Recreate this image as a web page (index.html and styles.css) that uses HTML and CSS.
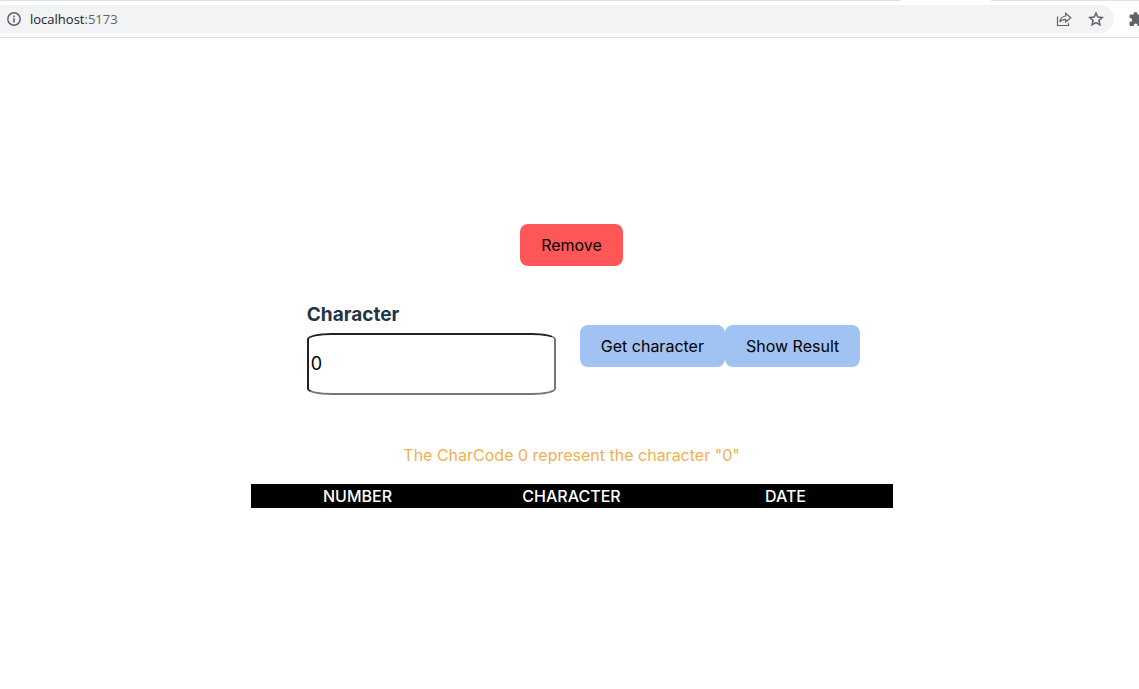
FILE: index.html
```html
<!DOCTYPE html>
<html lang="en">
<head>
<meta charset="utf-8">
<meta name="viewport" content="width=device-width, initial-scale=1">
<title>Character</title>
<link rel="stylesheet" href="styles.css">
</head>
<body>
<header class="toolbar">
  <div class="tab-edge"><span class="edge-left"></span><span class="edge-right"></span></div>
  <div class="toolbar-row">
    <div class="address">
      <svg class="icon" viewBox="0 0 16 16" aria-hidden="true"><circle cx="8" cy="8" r="6.2" fill="none" stroke="#5f6368" stroke-width="1.5"/><path d="M7.2 4.6h1.6v1.6H7.2zM7.2 7.2h1.6v4.2H7.2z" fill="#5f6368"/></svg>
      <span class="url">localhost<span class="port">:5173</span></span>
      <button class="tool" aria-label="Share"><svg class="icon" viewBox="0 0 16 16"><path d="M1.5 5.5v9h11v-2.2M9.7 5V2.3L14.8 6.7 9.7 11V8.4C7 8.4 5.2 9.2 3.8 11 4.3 8 6 5.4 9.7 5z" fill="none" stroke="#5f6368" stroke-width="1.2" stroke-linejoin="miter"/></svg></button>
      <button class="tool" aria-label="Bookmark"><svg class="icon" viewBox="0 0 16 16"><path d="M8 2l1.8 4.1 4.4.4-3.3 3 1 4.3L8 11.5l-3.9 2.3 1-4.3-3.3-3 4.4-.4z" fill="none" stroke="#5f6368" stroke-width="1.5"/></svg></button>
    </div>
    <button class="extensions" aria-label="Extensions"><svg class="icon" viewBox="0 0 16 16"><path d="M1.5 4.5a1 1 0 0 1 1-1h3V3a2 2 0 0 1 4 0v.5h3a1 1 0 0 1 1 1v3h.3a2 2 0 0 1 0 4h-.3V14a1 1 0 0 1-1 1H9.6v-.7a1.9 1.9 0 0 0-3.8 0v.7H2.5a1 1 0 0 1-1-1v-3.2h.7a1.9 1.9 0 0 0 0-3.8h-.7z" fill="#5f6368"/></svg></button>
  </div>
</header>
<main class="page">
  <button class="button remove">Remove</button>
  <form class="form">
    <div class="field">
      <label class="label" for="code">Character</label>
      <input class="input" id="code" type="text" value="0">
    </div>
    <div class="actions">
      <button class="button" type="button">Get character</button>
      <button class="button" type="button">Show Result</button>
    </div>
  </form>
  <p class="message">The CharCode 0 represent the character "0"</p>
  <table class="results">
    <thead><tr><th>NUMBER</th><th>CHARACTER</th><th>DATE</th></tr></thead>
  </table>
</main>
</body>
</html>
```
FILE: styles.css
```css
* { box-sizing: border-box; }
body {
  margin: 0;
  background: #fff;
  color: #213547;
  font: 16px/24px Inter, sans-serif;
  overflow-x: hidden;
}
button { border: 0; background: none; padding: 0; font: inherit; color: #000; cursor: pointer; }
.toolbar { border-bottom: 1px solid #dadce0; overflow: hidden; }
.tab-edge { display: flex; justify-content: space-between; height: 1px; }
.edge-left { width: 79%; background: #dee1e6; }
.edge-right { width: 13%; background: #dee1e6; }
.toolbar-row { display: flex; align-items: center; gap: 14px; padding: 4px 0; }
.address {
  display: flex;
  flex: 1;
  align-items: center;
  height: 28px;
  margin-left: -10px;
  padding: 0 10px 0 16px;
  border-radius: 14px;
  background: #f1f3f4;
}
.icon { display: block; flex: none; width: 16px; height: 16px; }
.url { flex: 1; margin-left: 8px; font: 13px/20px "Open Sans", sans-serif; color: #202124; }
.port { color: #5f6368; }
.tool { margin-left: 16px; }
.extensions { width: 11px; }
.page {
  display: flex;
  flex-direction: column;
  align-items: center;
  padding: 186px 0 0 4px;
}
.button { height: 42px; padding: 0 21px; border-radius: 8px; background: #a0c3f3; }
.remove { background: #ff5757; }
.form { display: flex; align-items: center; margin-top: 31px; }
.field { display: flex; flex-direction: column; margin: 0 24px; }
.label { font-size: 19px; font-weight: 700; line-height: 36px; }
.input {
  width: 249px;
  height: 62px;
  padding: 0 2px 2px;
  border: 2px solid;
  border-color: #212121 #767676 #767676 #212121;
  border-radius: 10%;
  background: #fff;
  color: #000;
  font: 18px/24px Inter, sans-serif;
}
.actions { display: flex; }
.message { margin: 48px 0 17px; color: #f0b14e; }
.results { width: 642px; max-width: 100%; border-spacing: 0; table-layout: fixed; background: #000; color: #fff; }
.results th { padding: 0; font-weight: 500; }
```
